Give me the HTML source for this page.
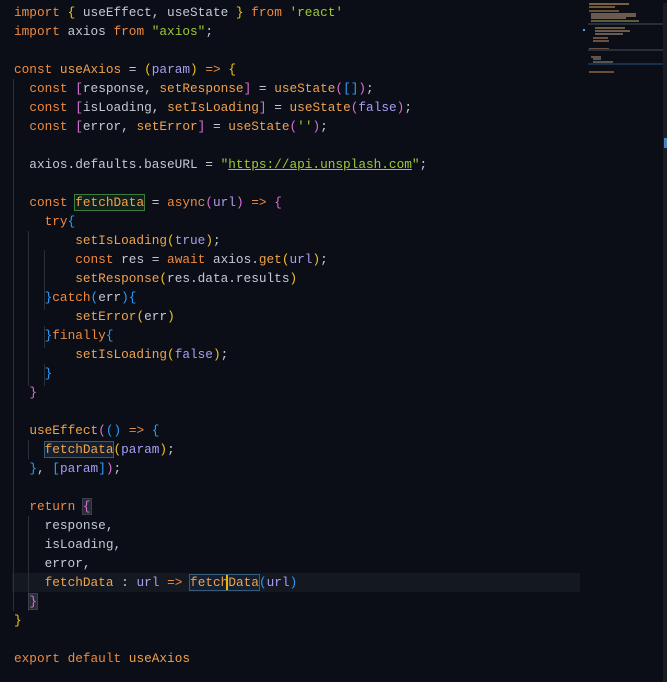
<!DOCTYPE html>
<html><head><meta charset="utf-8"><style>
html,body{margin:0;padding:0;background:#0b0e16;width:667px;height:682px;overflow:hidden}
#code{position:absolute;left:14px;top:3px;font-family:"Liberation Mono",monospace;font-size:12.75px;line-height:19px;color:#c3cad6;white-space:pre}
.k{color:#ef8a3e}.f{color:#f0a24d}.s{color:#9fc93a}.p{color:#a99cf5}
.y{color:#f4c21f}.m{color:#d870d6}.b{color:#2a9dff}.o{color:#c3cad6}
.box{outline:1px solid #3a5a7a;background:#142030}
.gb{outline:1px solid #3f7a3f;background:#12201a}
.line{position:absolute;left:12px;top:573px;width:568px;height:19px;background:#141821}
.guide{position:absolute;width:1px;background:#2a2f38}
#mini{position:absolute;left:580px;top:0;width:87px;height:682px}
.ml{position:absolute;height:2px}
</style></head><body>
<div class="line"></div>
<div class="guide" style="left:13px;top:79px;height:532px"></div>
<div class="guide" style="left:28px;top:231px;height:155px"></div>
<div class="guide" style="left:44px;top:250px;height:60px"></div>
<div class="guide" style="left:44px;top:326px;height:22px"></div>
<div class="guide" style="left:44px;top:364px;height:22px"></div>
<div class="guide" style="left:28px;top:440px;height:19px"></div>
<div class="guide" style="left:28px;top:516px;height:95px"></div>
<div id="code"><span class="k">import</span> <span class="y">{</span> useEffect, useState <span class="y">}</span> <span class="k">from</span> <span class="s">'react'</span>
<span class="k">import</span> axios <span class="k">from</span> <span class="s">"axios"</span>;

<span class="k">const</span> <span class="f">useAxios</span> = <span class="y">(</span><span class="p">param</span><span class="y">)</span> <span class="k">=&gt;</span> <span class="y">{</span>
  <span class="k">const</span> <span class="m">[</span>response, <span class="f">setResponse</span><span class="m">]</span> = <span class="f">useState</span><span class="m">(</span><span class="b">[]</span><span class="m">)</span>;
  <span class="k">const</span> <span class="m">[</span>isLoading, <span class="f">setIsLoading</span><span class="m">]</span> = <span class="f">useState</span><span class="m">(</span><span class="p">false</span><span class="m">)</span>;
  <span class="k">const</span> <span class="m">[</span>error, <span class="f">setError</span><span class="m">]</span> = <span class="f">useState</span><span class="m">(</span><span class="s">''</span><span class="m">)</span>;

  axios.defaults.baseURL = <span class="s">"<u>https://api.unsplash.com</u>"</span>;

  <span class="k">const</span> <span class="f gb">fetchData</span> = <span class="k">async</span><span class="m">(</span><span class="p">url</span><span class="m">)</span> <span class="k">=&gt;</span> <span class="m">{</span>
    <span class="k">try</span><span class="b">{</span>
        <span class="f">setIsLoading</span><span class="y">(</span><span class="p">true</span><span class="y">)</span>;
        <span class="k">const</span> res = <span class="k">await</span> axios.<span class="f">get</span><span class="y">(</span><span class="p">url</span><span class="y">)</span>;
        <span class="f">setResponse</span><span class="y">(</span>res.data.results<span class="y">)</span>
    <span class="b">}</span><span class="k">catch</span><span class="b">(</span>err<span class="b">){</span>
        <span class="f">setError</span><span class="y">(</span>err<span class="y">)</span>
    <span class="b">}</span><span class="k">finally</span><span class="b">{</span>
        <span class="f">setIsLoading</span><span class="y">(</span><span class="p">false</span><span class="y">)</span>;
    <span class="b">}</span>
  <span class="m">}</span>

  <span class="f">useEffect</span><span class="m">(</span><span class="b">()</span> <span class="k">=&gt;</span> <span class="b">{</span>
    <span class="f box">fetchData</span><span class="y">(</span><span class="p">param</span><span class="y">)</span>;
  <span class="b">}</span>, <span class="b">[</span><span class="p">param</span><span class="b">]</span><span class="m">)</span>;

  <span class="k">return</span> <span class="m" style="background:#262b35;outline:1px solid #3a3f48">{</span>
    response,
    isLoading,
    error,
    <span class="f">fetchData</span> : <span class="p">url</span> <span class="k">=&gt;</span> <span class="f box">fetch<span style="border-left:2px solid #f4b400;margin-left:-2px">D</span>ata</span><span class="b">(</span><span class="p">url</span><span class="b">)</span>
  <span class="m" style="background:#262b35;outline:1px solid #3a3f48">}</span>
<span class="y">}</span>

<span class="k">export</span> <span class="k">default</span> <span class="f">useAxios</span></div>
<div id="mini">
<div class="ml" style="left:9px;top:3px;width:40px;background:#7a6040"></div>
<div class="ml" style="left:9px;top:6px;width:26px;background:#6a5a3a"></div>
<div class="ml" style="left:9px;top:10px;width:30px;background:#6a5030"></div>
<div class="ml" style="left:11px;top:13px;width:45px;background:#6a5a50"></div>
<div class="ml" style="left:11px;top:15px;width:45px;background:#6a5a50"></div>
<div class="ml" style="left:11px;top:17px;width:35px;background:#6a5a50"></div>
<div class="ml" style="left:11px;top:20px;width:48px;background:#556040"></div>
<div class="ml" style="left:8px;top:23px;width:75px;height:2px;background:#2a2e36"></div>
<div class="ml" style="left:3px;top:29px;width:2px;height:2px;background:#4aa0ff"></div>
<div class="ml" style="left:15px;top:27px;width:30px;background:#6a5a40"></div>
<div class="ml" style="left:15px;top:30px;width:35px;background:#6a5a50"></div>
<div class="ml" style="left:15px;top:33px;width:28px;background:#6a5a50"></div>
<div class="ml" style="left:13px;top:37px;width:15px;background:#6a5040"></div>
<div class="ml" style="left:13px;top:40px;width:16px;background:#6a5040"></div>
<div class="ml" style="left:9px;top:48px;width:20px;background:#6a5040"></div>
<div class="ml" style="left:8px;top:49px;width:75px;height:2px;background:#2a2e36"></div>
<div class="ml" style="left:11px;top:56px;width:10px;background:#6a5040"></div>
<div class="ml" style="left:13px;top:58px;width:8px;background:#555"></div>
<div class="ml" style="left:13px;top:61px;width:20px;background:#555"></div>
<div class="ml" style="left:8px;top:63px;width:75px;height:2px;background:#1a3048"></div>
<div class="ml" style="left:9px;top:71px;width:25px;background:#6a5030"></div>
<div class="ml" style="left:83px;top:3px;width:4px;height:679px;background:#1a1d24"></div>
<div class="ml" style="left:84px;top:138px;width:3px;height:10px;background:#4a80c0"></div>
</div>
</body></html>
